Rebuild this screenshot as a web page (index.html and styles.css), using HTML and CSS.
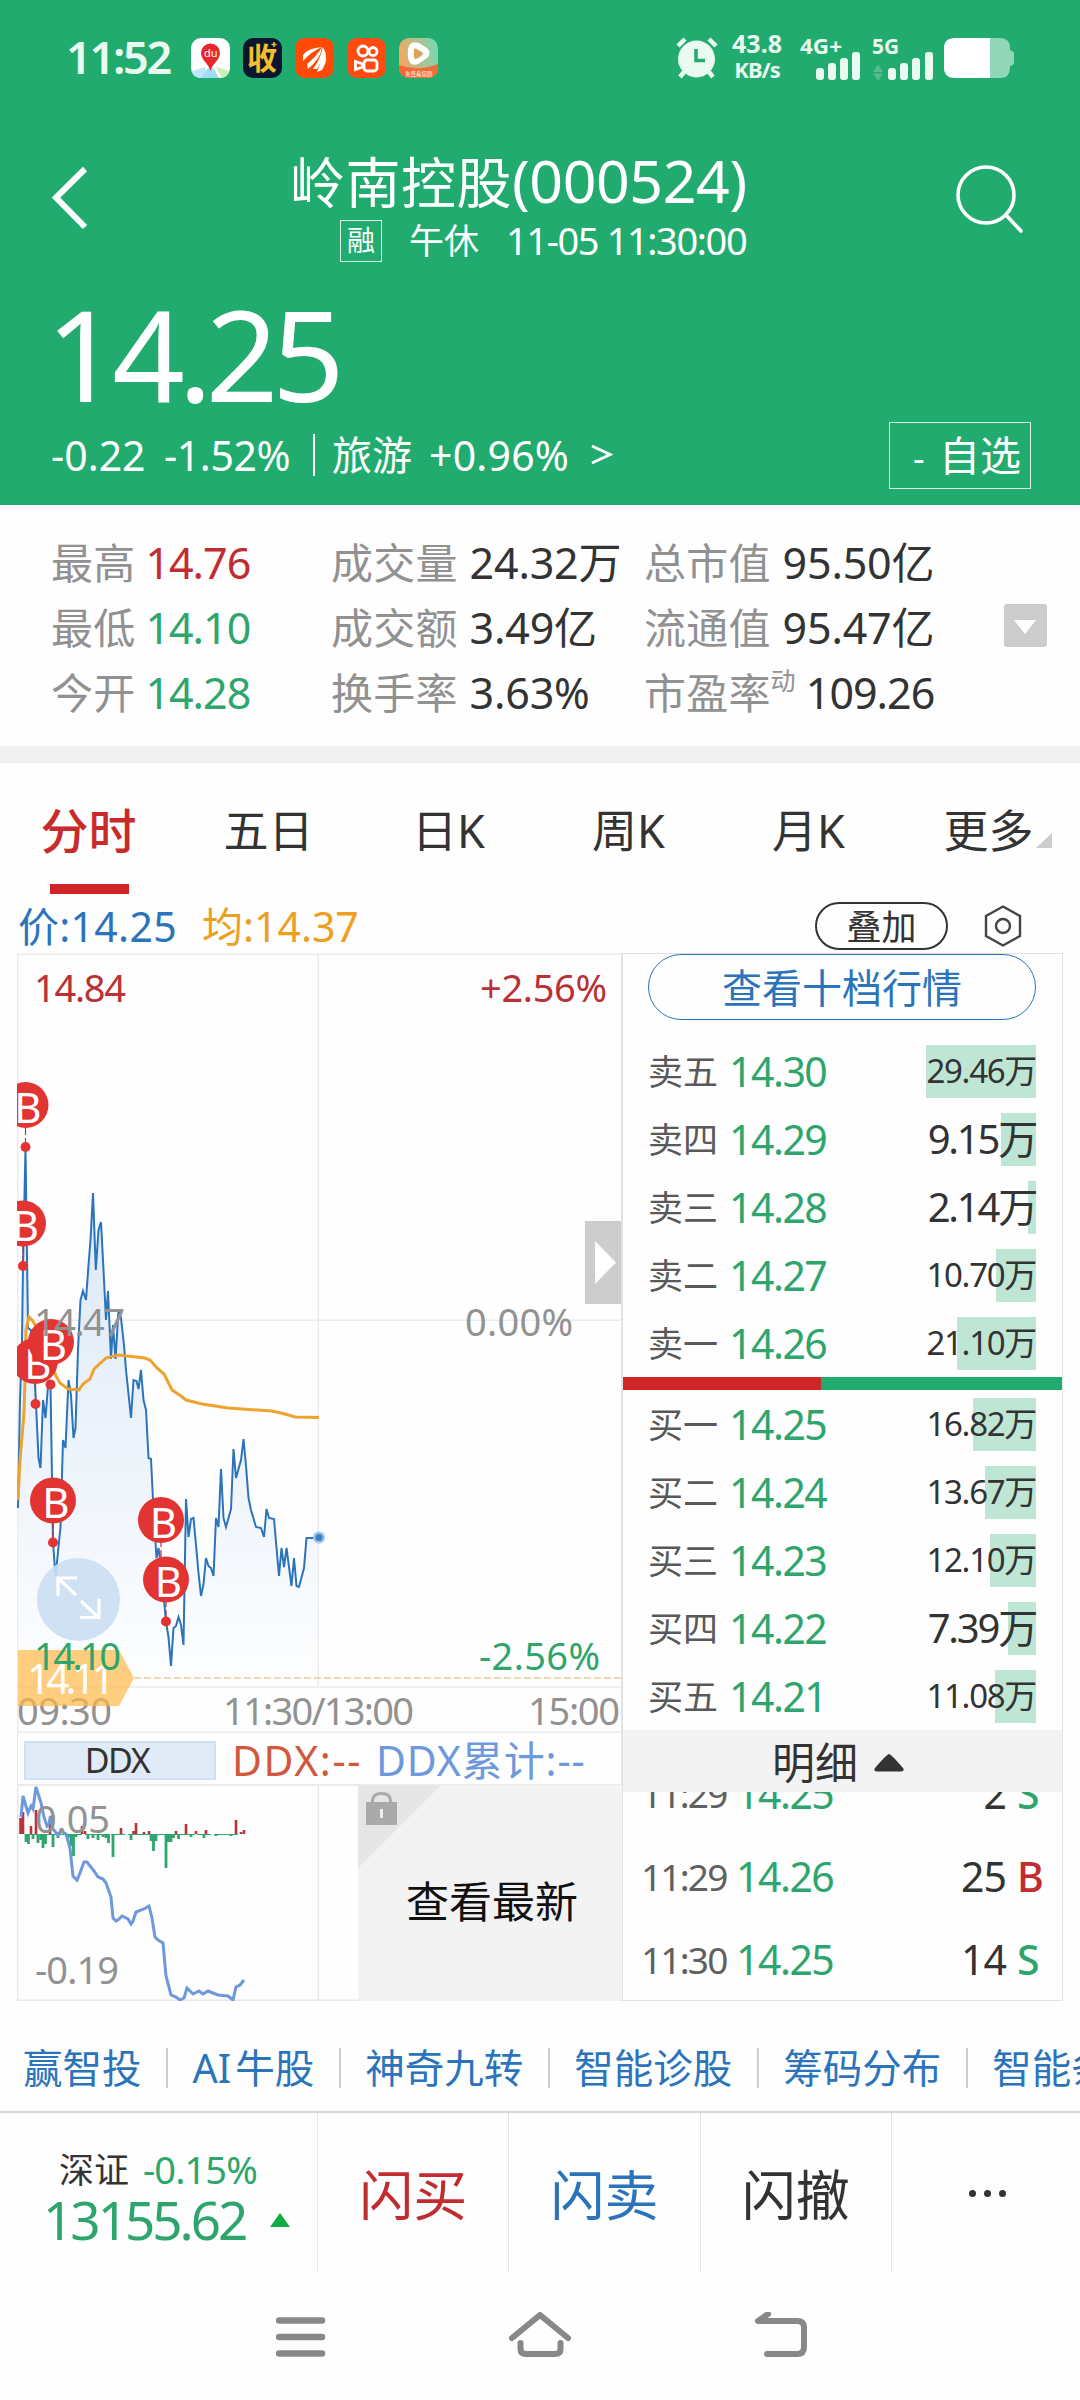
FILE: index.html
```html
<!DOCTYPE html>
<html lang="zh-CN">
<head>
<meta charset="UTF-8">
<meta name="viewport" content="width=device-width, initial-scale=1.0">
<title>岭南控股(000524)</title>
<link rel="stylesheet" href="styles.css">
</head>
<body>
    <!-- Green quote header -->
    <div class="header">
        <div class="statusbar">
            <span class="clock">11:52</span>
            <div class="apps">
                <svg viewBox="0 0 39 40" width="39" height="40">
                    <rect width="39" height="40" rx="10" fill="#fff"/>
                    <path d="M1 33 L14 29 L17 40 H9 Q2 39 1 33Z" fill="#bfe6fb"/>
                    <path d="M17 30 H22 L28 40 H10Z" fill="#9fdcf8"/>
                    <path d="M25 29 L38 33 Q37 39 31 40Z" fill="#c9eeb4"/>
                    <path d="M19.500 33 C18 26 10 22 10 15 A9.500 9.500 0 0 1 29 15 C29 22 21 26 19.500 33Z" fill="#e8272c"/>
                    <text x="13" y="19" class="app-du">du</text>
                </svg>
                <svg viewBox="0 0 39 40" width="39" height="40">
                    <rect width="39" height="40" rx="10" fill="#08172d"/>
                    <text x="4" y="31" class="app-shou">收</text>
                    <path d="M31 4v5M28.500 6.500h5" stroke="#f5bd2c" stroke-width="1.500"/>
                </svg>
                <svg viewBox="0 0 39 40" width="39" height="40">
                    <rect width="39" height="40" rx="10" fill="#ff4a05"/>
                    <path d="M8 17 Q13 10 27 9 Q17 13 8 23Z M12 26 Q22 18 27 9 Q26 20 13 31Z M22 34 Q27 22 28 9 Q35 21 27 32Z" fill="#fff"/>
                    <path d="M18 31 Q25 22 28 9 Q29 21 22 31Z" fill="#fff"/>
                </svg>
                <svg viewBox="0 0 39 40" width="39" height="40">
                    <rect width="39" height="40" rx="10" fill="#ff4a10"/>
                    <g fill="none" stroke="#fff" stroke-width="2.800">
                        <circle cx="16" cy="13" r="5"/><circle cx="26" cy="13.500" r="4"/>
                        <rect x="17" y="22" width="13" height="11" rx="3"/>
                        <path d="M8.500 23.500v8l7-2.500v-3Z"/>
                    </g>
                </svg>
                <svg viewBox="0 0 39 40" width="39" height="40">
                    <defs><linearGradient id="play" x1="0" x2="1" y1="0.200" y2="0"><stop offset="0" stop-color="#f0a868"/><stop offset="1" stop-color="#6fdcb8"/></linearGradient></defs>
                    <rect width="39" height="40" rx="10" fill="url(#play)"/>
                    <path d="M0 27 Q20 34 39 26 V31 Q38 39 30 40 H9 Q1 39 0 31Z" fill="#f26a35"/>
                    <path d="M11 6 Q15 3 20 5 L28 10 Q33 15 28 20 L19 26 Q10 29 9 19 Q8 10 11 6Z" fill="#fff"/>
                    <path d="M15 11 Q16 9 24 15 Q25 17 17 21 Q14 22 15 11Z" fill="#dba45e"/>
                    <text x="6" y="38" class="app-play">免费看短剧</text>
                </svg>
            </div>
            <svg class="alarm" viewBox="0 0 42 42" width="42" height="42">
                <circle cx="20.500" cy="22" r="18.500" fill="#e9faf1"/>
                <path d="M2 9 L9 2 M33 2 L40 9 M8 35 L4 40 M33 35 L37 40" stroke="#e9faf1" stroke-width="4.500"/>
                <path d="M20 12 V23.500 H29" fill="none" stroke="#22ab6e" stroke-width="3.500"/>
            </svg>
            <div class="speed"><span>43.8</span><span>KB/s</span></div>
            <svg class="signal" viewBox="0 0 136 46" width="136" height="46">
                <g fill="#e9faf1">
                    <text x="0" y="19" textLength="42" lengthAdjust="spacingAndGlyphs">4G+</text>
                    <text x="72" y="19" textLength="27" lengthAdjust="spacingAndGlyphs">5G</text>
                    <rect x="16" y="33" width="8" height="12" rx="3"/><rect x="28" y="28" width="8" height="17" rx="3"/>
                    <rect x="40" y="23" width="8" height="22" rx="3"/><rect x="52" y="17" width="8" height="28" rx="3"/>
                    <rect x="88" y="33" width="8" height="12" rx="3"/><rect x="100" y="28" width="8" height="17" rx="3"/>
                    <rect x="112" y="23" width="8" height="22" rx="3"/><rect x="125" y="17" width="8" height="28" rx="3"/>
                </g>
                <path d="M73 37 L78 29.500 L83 37Z M73 38.500 L78 45.500 L83 38.500Z" fill="#52bd8d"/>
            </svg>
            <svg class="battery" viewBox="0 0 70 40" width="70" height="40">
                <path d="M46 0 H56 Q66 0 66 10 V12 Q70 13 70 16 V24 Q70 27 66 28 V30 Q66 40 56 40 H46Z" fill="#90d6b7"/>
                <path d="M46 0 H11 Q0 0 0 10 V30 Q0 40 11 40 H46Z" fill="#fff"/>
            </svg>
        </div>

        <div class="titlebar">
            <svg class="back" viewBox="0 0 38 64" width="38" height="64"><path d="M34 3 L5 31.500 L34 61" fill="none" stroke="#fff" stroke-width="6"/></svg>
            <div class="title">
                <h1>岭南控股<span>(000524)</span></h1>
                <p><span class="tag">融</span><span class="state">午休</span><span class="time">11-05 11:30:00</span></p>
            </div>
            <svg class="search" viewBox="0 0 68 68" width="68" height="68"><g fill="none" stroke="#fff" stroke-width="3.600"><circle cx="30" cy="30" r="28"/><path d="M50 50 L65 66" stroke-linecap="round"/></g></svg>
        </div>

        <div class="price">14.25</div>
        <div class="change">
            <span class="c1">-0.22</span><span class="c2">-1.52%</span><i></i><span class="c3">旅游</span><span class="c4">+0.96%</span>
            <svg viewBox="0 0 22 24" width="22" height="24"><path d="M1 3 L19 11.500 L1 20" fill="none" stroke="#fff" stroke-width="3"/></svg>
            <button class="fav">- <b>自选</b></button>
        </div>
    </div>

    <!-- Key figures -->
    <div class="stats">
        <div class="cell"><label>最高</label><span class="up">14.76</span></div>
        <div class="cell wide"><label>成交量</label><span>24.32万</span></div>
        <div class="cell wide"><label>总市值</label><span>95.50亿</span></div>
        <div class="cell"><label>最低</label><span class="down">14.10</span></div>
        <div class="cell wide"><label>成交额</label><span>3.49亿</span></div>
        <div class="cell wide"><label>流通值</label><span>95.47亿</span></div>
        <div class="cell"><label>今开</label><span class="down">14.28</span></div>
        <div class="cell wide"><label>换手率</label><span>3.63%</span></div>
        <div class="cell"><label>市盈率<sup>动</sup></label><span>109.26</span></div>
        <div class="more"></div>
    </div>

    <div class="tabs">
        <a class="active">分时</a><a>五日</a><a>日K</a><a>周K</a><a>月K</a><a class="last">更多</a>
    </div>

    <div class="legend">
        <span class="now">价:14.25</span><span class="avg">均:14.37</span>
        <button>叠加</button>
        <svg viewBox="0 0 40 42" width="40" height="42"><g fill="none" stroke="#444" stroke-width="2.400"><path d="M20 1.500 L37 11 V31 L20 40.500 L3 31 V11Z"/><circle cx="20" cy="21" r="7"/></g></svg>
    </div>

    <div class="board">
        <div class="charts">
            <!-- Minute chart -->
            <svg class="minute" viewBox="17 953 605 780" width="605" height="780">
                <defs><linearGradient id="area" x1="0" y1="0" x2="0" y2="1"><stop offset="0" stop-color="#d9e6f5"/><stop offset="1" stop-color="#fdfeff"/></linearGradient>
                <clipPath id="plot"><rect x="17" y="953" width="605" height="780"/></clipPath></defs>
                <path d="M18 1508 L20 1400 22 1340 23 1266 25.500 1147 28 1328 31 1330 35 1385 36 1404 38.500 1458 40.500 1468 43 1400 45.500 1418 48 1386 50.500 1384 53 1542 55.500 1577 60.500 1527 63 1440 65.500 1448 68.500 1380 71 1395 73.500 1438 75.500 1428 78 1350 80.500 1300 83 1291 86 1300 88.500 1265 90.500 1240 93 1193 95.800 1270 98.500 1230 101 1222 103.500 1270 106 1320 108 1291 111 1359 113 1325 115.500 1359 118.500 1310 121 1318 124 1345 126 1370 131 1418 133.500 1380 136.500 1381 138.500 1389 141 1370 143.500 1400 146 1410 148.500 1458 151 1459 153.500 1510 156.500 1558 158.500 1548 161 1565 166 1622 168.500 1637 171 1666 173.500 1628 176 1626 178.500 1617 181 1625 183.500 1645 186 1499 188.500 1537 191 1519 193.500 1518 196 1545 198.500 1573 201 1596 203.500 1584 206 1558 208.500 1566 211 1568 213.500 1576 216 1518 218.500 1527 221 1469 223.500 1518 226 1527 231 1509 233.500 1449 236 1478 241 1460 243.500 1439 246 1466 248.500 1498 251 1510 256 1527 261 1528 264 1537 266.500 1509 269 1518 274 1519 276.500 1548 279 1576 281.500 1548 284 1567 286.500 1548 291.500 1586 294 1558 296.500 1586 299 1587 304 1568 306.500 1538 318 1538 V1686 H18Z" fill="url(#area)"/>
                <g fill="none" stroke="#ececec" stroke-width="1.500">
                    <path d="M17.700 1733 V954.200 H622 M318.300 954 V1687 M17 1320.300 H622 M17 1687 H622 M17 1732.300 H622"/>
                </g>
                <path d="M134 1678 H621" stroke="#ecd9b8" stroke-width="2" stroke-dasharray="7 3"/>
                <path d="M18 1508 L20 1400 22 1340 23 1266 25.500 1147 28 1328 31 1330 35 1385 36 1404 38.500 1458 40.500 1468 43 1400 45.500 1418 48 1386 50.500 1384 53 1542 55.500 1577 60.500 1527 63 1440 65.500 1448 68.500 1380 71 1395 73.500 1438 75.500 1428 78 1350 80.500 1300 83 1291 86 1300 88.500 1265 90.500 1240 93 1193 95.800 1270 98.500 1230 101 1222 103.500 1270 106 1320 108 1291 111 1359 113 1325 115.500 1359 118.500 1310 121 1318 124 1345 126 1370 131 1418 133.500 1380 136.500 1381 138.500 1389 141 1370 143.500 1400 146 1410 148.500 1458 151 1459 153.500 1510 156.500 1558 158.500 1548 161 1565 166 1622 168.500 1637 171 1666 173.500 1628 176 1626 178.500 1617 181 1625 183.500 1645 186 1499 188.500 1537 191 1519 193.500 1518 196 1545 198.500 1573 201 1596 203.500 1584 206 1558 208.500 1566 211 1568 213.500 1576 216 1518 218.500 1527 221 1469 223.500 1518 226 1527 231 1509 233.500 1449 236 1478 241 1460 243.500 1439 246 1466 248.500 1498 251 1510 256 1527 261 1528 264 1537 266.500 1509 269 1518 274 1519 276.500 1548 279 1576 281.500 1548 284 1567 286.500 1548 291.500 1586 294 1558 296.500 1586 299 1587 304 1568 306.500 1538 318 1538" fill="none" stroke="#2b74bb" stroke-width="2"/>
                <path d="M18 1500 L20 1460 24 1413 25 1380 26 1330 29 1317 32 1320 37 1328 50 1360 56 1376 60 1383 68 1389 79 1390 83 1384 90 1379 94 1369 106 1358 118 1355 145 1358 150 1360 157 1368 164 1374 172 1390 181 1396 186 1400 202 1404 228 1408 272 1411 285 1414 295 1417 319 1417.500" fill="none" stroke="#eda32d" stroke-width="3"/>
                <circle cx="319" cy="1537.500" r="6" fill="#9cc3ea"/><circle cx="319" cy="1537.500" r="3.500" fill="#3f80c4"/>
                <!-- Buy markers -->
                <g class="marks" clip-path="url(#plot)">
                    <path d="M25.500 1128 V1145 M23 1246 V1264 M35.500 1384 V1400 M53 1522 V1540 M161 1540 V1560 M166 1600 V1620" stroke="#c2303c" stroke-width="1.200" stroke-dasharray="7 3"/>
                    <circle cx="25.500" cy="1147" r="5"/><circle cx="23" cy="1266" r="5"/><circle cx="35.500" cy="1404" r="5"/><circle cx="50.500" cy="1384.500" r="5"/><circle cx="53" cy="1542.500" r="5"/><circle cx="166" cy="1621.500" r="5"/>
                    <circle cx="25.500" cy="1105" r="23"/><text x="28" y="1122.500">B</text>
                    <circle cx="23" cy="1223.500" r="23"/><text x="25.500" y="1241">B</text>
                    <circle cx="35" cy="1361" r="23"/><text x="38" y="1378.500">B</text>
                    <circle cx="51" cy="1342" r="23"/><text x="53.500" y="1359.500">B</text>
                    <circle cx="53" cy="1500.500" r="23"/><text x="56" y="1518">B</text>
                    <circle cx="161" cy="1520" r="23"/><text x="163.500" y="1537.500">B</text>
                    <circle cx="166" cy="1579.500" r="23"/><text x="168.500" y="1597">B</text>
                </g>
                <!-- Fullscreen toggle -->
                <circle cx="78.500" cy="1599.500" r="41.500" fill="#cbdef1" fill-opacity="0.920"/>
                <path d="M58 1596 V1578 H77 M59 1579 L76 1595 M81 1601 L98 1617 M99 1599 V1617.500 H80" fill="none" stroke="#fff" stroke-width="3.200"/>
                <!-- Axis labels -->
                <g class="axis">
                    <text x="34" y="1336" textLength="91">14.47</text><text x="465" y="1336" textLength="108">0.00%</text>
                    <text x="17" y="1725" textLength="95">09:30</text><text x="223" y="1725" textLength="191">11:30/13:00</text><text x="528" y="1725" textLength="92">15:00</text>
                </g>
                <path d="M18 1650 H119 L134 1678 L119 1706 H18Z" fill="#ffb847" fill-opacity="0.700"/>
                <text x="27" y="1694" textLength="88" class="tagtext">14.11</text>
                <g class="axis">
                    <text x="34" y="1001.500" textLength="92" class="up">14.84</text><text x="480" y="1001.500" textLength="127" class="up">+2.56%</text>
                    <text x="34" y="1670" textLength="87" class="down">14.10</text><text x="479" y="1670" textLength="121" class="down">-2.56%</text>
                </g>
                <rect x="585" y="1221" width="37" height="83" fill="#cdcdcd"/><path d="M595 1241 L616 1262.500 L595 1284Z" fill="#fff"/>
            </svg>
            <!-- DDX indicator -->
            <div class="ddx-head">
                <button>DDX</button><span class="d1">DDX:--</span><span class="d2">DDX累计:--</span>
            </div>
            <div class="ddx">
                <svg viewBox="17 1786 341 215" width="341" height="215">
                    <path d="M17.700 1786 V2000.300 H358 M318.300 1786 V2000" fill="none" stroke="#e8e8e8" stroke-width="1.500"/>
                    <path d="M25 1834.500 H240" stroke="#2ea66e" stroke-width="1" stroke-dasharray="14 3 24 2"/>
                    <path d="M20.500 1834v-16M23 1834v-22M31 1834v-8M36 1834v-24M50 1834v-15M82 1834v-8M85 1834v-3M121 1834v-6M133.500 1834v-3M136 1834v-11M144 1834v-2M149 1834v-3M176 1834v-3M186 1834v-10M196 1834v-3M206 1834v-4M236 1834v-14M241 1834v-2M244 1834v-4" stroke="#bb3338" stroke-width="2.600"/>
                    <path d="M26 1834v8M28.500 1834v10M33 1834v5M38 1834v9M41 1834v6M43 1834v14M45.500 1834v10M53 1834v13M58 1834v4M68 1834v4M71 1834v12M73.500 1834v22M76 1834v3M88 1834v5M93 1834v4M98 1834v6M103 1834v3M106 1834v4M108.500 1834v9M113 1834v23M131 1834v6M151 1834v7M153.500 1834v17M156 1834v7M166 1834v34M168.500 1834v8M171 1834v8M173.500 1834v4M178.500 1834v5M191 1834v3M204 1834v4M216 1834v2M231 1834v2" stroke="#2ea66e" stroke-width="2.800"/>
                    <path d="M21 1817 L23 1796 28 1813 31 1806 33 1809 36 1787 41 1803 44 1817 47 1826 49 1824 50.500 1816 53 1829 58 1835 61 1831 66 1834 70 1848 73 1876 77 1880 80 1873 84 1862 87 1862 94 1871 98 1877 103 1879 106 1883 111 1897 113 1918 116 1921 118 1920 122 1916 128 1919 131 1924 133 1921 136 1912 144 1909 149 1906 152 1918 155 1937 158 1940 163 1943 166 1976 171 1995 176 1997 180 2000 184 1998 187 1988 193 1994 199 1991 203 1994 208 1991 218 1995 228 1996 233 2000 236 1987 240 1985 244 1980" fill="none" stroke="#6d99dc" stroke-width="3"/>
                    <g class="axis"><text x="35" y="1833" textLength="75">0.05</text><text x="35" y="1984" textLength="84">-0.19</text></g>
                </svg>
                <div class="locked">
                    <svg viewBox="0 0 83 83" width="83" height="83"><path d="M0 0 H83 L0 83Z" fill="#e6e6e6"/><path d="M14.500 17 V16 Q14.500 8.500 23.500 8.500 Q32.500 8.500 32.500 16 V17" fill="none" stroke="#aaa" stroke-width="3"/><rect x="8" y="17" width="31" height="23" fill="#aaa"/><rect x="22" y="24" width="3" height="9" fill="#eee"/></svg>
                    查看最新
                </div>
            </div>
        </div>

        <!-- Order book -->
        <div class="book">
            <button class="level">查看十档行情</button>
            <div class="row"><label>卖五</label><span class="down">14.30</span><em class="small"><i style="width:110px"></i><b>29.46万</b></em></div>
            <div class="row"><label>卖四</label><span class="down">14.29</span><em><i style="width:35px"></i><b>9.15万</b></em></div>
            <div class="row"><label>卖三</label><span class="down">14.28</span><em><i style="width:8px"></i><b>2.14万</b></em></div>
            <div class="row"><label>卖二</label><span class="down">14.27</span><em class="small"><i style="width:40px"></i><b>10.70万</b></em></div>
            <div class="row"><label>卖一</label><span class="down">14.26</span><em class="small"><i style="width:79px"></i><b>21.10万</b></em></div>
            <div class="ratio"></div>
            <div class="row"><label>买一</label><span class="down">14.25</span><em class="small"><i style="width:63px"></i><b>16.82万</b></em></div>
            <div class="row"><label>买二</label><span class="down">14.24</span><em class="small"><i style="width:51px"></i><b>13.67万</b></em></div>
            <div class="row"><label>买三</label><span class="down">14.23</span><em class="small"><i style="width:46px"></i><b>12.10万</b></em></div>
            <div class="row"><label>买四</label><span class="down">14.22</span><em><i style="width:28px"></i><b>7.39万</b></em></div>
            <div class="row"><label>买五</label><span class="down">14.21</span><em class="small"><i style="width:41px"></i><b>11.08万</b></em></div>
            <div class="detail">明细<svg viewBox="0 0 30 18" width="30" height="18"><path d="M15 0 Q17 0 29 14 Q31 17 27 17.500 H3 Q-1 17 1 14 Q13 0 15 0Z" fill="#333"/></svg></div>
            <div class="trades">
                <div class="trade"><label>11:29</label><span class="down">14.25</span><em>2</em><b class="down">S</b></div>
                <div class="trade"><label>11:29</label><span class="down">14.26</span><em>25</em><b class="up">B</b></div>
                <div class="trade"><label>11:30</label><span class="down">14.25</span><em>14</em><b class="down">S</b></div>
            </div>
        </div>
    </div>

    <div class="links">
        <a>赢智投</a><a>AI<s></s>牛股</a><a>神奇九转</a><a>智能诊股</a><a>筹码分布</a><a>智能条件</a>
    </div>

    <div class="actions">
        <div class="index">
            <p><span class="name">深证</span><span class="pct">-0.15%</span></p>
            <p><span class="point">13155.62</span><svg viewBox="0 0 20 14" width="20" height="14"><path d="M10 0 L20 14 H0Z" fill="#11ab43"/></svg></p>
        </div>
        <a class="buy">闪买</a><a class="sell">闪卖</a><a>闪撤</a>
        <a class="dots"><i></i><i></i><i></i></a>
    </div>

    <div class="navkeys">
        <svg viewBox="0 0 50 50" width="50" height="50"><path d="M3 8.500 H46 M3 25 H46 M3 41.500 H46" stroke="#888" stroke-width="6.500" stroke-linecap="round"/></svg>
        <svg viewBox="0 0 64 50" width="64" height="50"><g fill="none" stroke="#888" stroke-width="6" stroke-linecap="round" stroke-linejoin="round"><path d="M4 26 L32 3 L60 26"/><path d="M12.500 31 V37 Q12.500 42 18 42 H47 Q52.500 42 52.500 37 V31"/></g></svg>
        <svg viewBox="0 0 56 50" width="56" height="50"><path d="M14 2 L4 9 H43 Q50 9 50 15 V35 Q50 42 43 42 H13" fill="none" stroke="#888" stroke-width="6" stroke-linecap="round" stroke-linejoin="round"/></svg>
    </div>
</body>
</html>
```

FILE: styles.css
```css
/*General formatting*/
* {
    box-sizing: border-box;
}

body {
    font-family: "Noto Sans", "Noto Sans CJK SC", sans-serif;
    width: 1080px;
    height: 2400px;
    margin: 0;
    overflow: hidden;
    background-color: #fefefe;
    color: #333;
    line-height: 1;
}

svg {
    display: block;
    flex: none;
}

h1, p {
    margin: 0;
    font-weight: 400;
}

button {
    font-family: inherit;
    background: none;
    padding: 0;
    line-height: 1;
}

em, i {
    font-style: normal;
}

.up {
    color: #c12c2f;
    fill: #b93035;
}

.down {
    color: #2ea56d;
    fill: #2ea56d;
}

/* Header */
.header {
    height: 505px;
    background-color: #22ab6e;
    color: #fff;
}

.statusbar {
    display: flex;
    height: 115px;
    padding-left: 66px;
    align-items: center;
}

.clock {
    width: 125px;
    font-size: 45px;
    font-weight: 600;
    line-height: 64px;
    letter-spacing: -2.300px;
    color: #e9faf1;
    margin-top: -2px;
}

.apps {
    display: flex;
    gap: 13px;
    width: 485px;
}

.app-du {
    font-size: 11px;
    fill: #fff;
}

.app-shou {
    font-family: "Noto Sans CJK SC", sans-serif;
    font-size: 30px;
    font-weight: 700;
    fill: #f5bd2c;
}

.app-play {
    font-size: 5.500px;
    fill: #fff;
}

.speed {
    width: 56px;
    margin: -4px 15px 0 11px;
    display: flex;
    flex-direction: column;
    gap: 2px;
    font-size: 25px;
    font-weight: 700;
    text-align: center;
    color: #e9faf1;
}

.speed span + span {
    font-size: 22px;
    letter-spacing: -1px;
}

.signal {
    font-size: 22px;
    font-weight: 700;
    margin-right: 8px;
}

.titlebar {
    display: flex;
    height: 165px;
    padding: 0 55px 0 51px;
    align-items: flex-start;
}

.back {
    margin-top: 51px;
}

.title {
    flex: 1;
    margin-top: 31px;
    padding-left: 2px;
}

.title h1 {
    height: 68px;
    padding-left: 199px;
    font-size: 55px;
    line-height: 68px;
    letter-spacing: 0.500px;
    white-space: nowrap;
}

.title h1 span {
    font-size: 59px;
    letter-spacing: -0.400px;
}

.title p {
    display: flex;
    align-items: center;
    height: 44px;
    padding-left: 249px;
    margin-top: 5px;
}

.tag {
    width: 42px;
    height: 42px;
    border: 1px solid #d8f2e5;
    font-size: 28px;
    line-height: 39px;
    text-align: center;
}

.state {
    margin: -2px 0 0 27px;
    width: 97px;
    font-size: 35px;
}

.time {
    font-size: 38px;
    letter-spacing: -1.400px;
    margin-top: -3px;
    white-space: nowrap;
}

.search {
    margin-top: 50px;
    margin-right: 1px;
}

.price {
    height: 130px;
    padding-left: 46px;
    margin-top: 8px;
    font-size: 127px;
    font-weight: 400;
    line-height: 130px;
    letter-spacing: -6.500px;
}

.change {
    display: flex;
    align-items: center;
    height: 66px;
    padding-left: 51px;
    margin-top: 4px;
    font-size: 41px;
    white-space: nowrap;
}

.change .c1 {
    width: 113px;
}

.change .c2 {
    width: 149px;
    letter-spacing: -0.400px;
}

.change i {
    width: 2px;
    height: 42px;
    background: #fff;
    margin-right: 17px;
}

.change .c3 {
    width: 97px;
    font-size: 40px;
}

.change .c4 {
    width: 162px;
    letter-spacing: 0.200px;
}

.fav {
    width: 142px;
    height: 67px;
    margin-left: 276px;
    padding-left: 14px;
    border: 1px solid #d8f2e5;
    color: #fff;
    font-size: 36px;
    white-space: nowrap;
}

.fav b {
    font-size: 41px;
    font-weight: 400;
    margin-left: 5px;
}

/* Key figures */
.stats {
    position: relative;
    display: grid;
    grid-template-columns: 280px 313px 400px;
    grid-template-rows: 65px 65px 65px;
    height: 258px;
    padding: 25px 0 0 51px;
    border-bottom: 17px solid #f0f0f0;
}

.cell {
    display: flex;
    align-items: center;
    height: 65px;
    font-size: 43px;
    letter-spacing: -1px;
    white-space: nowrap;
}

.wide {
    letter-spacing: -0.200px;
}

.cell label {
    color: #919191;
    font-size: 42px;
    letter-spacing: 0.200px;
    margin-right: 10px;
}

.wide label {
    margin-right: 12px;
}

.cell sup {
    font-size: 25px;
    line-height: 0;
    vertical-align: 19px;
}

.more {
    position: absolute;
    right: 33px;
    top: 99px;
    width: 43px;
    height: 43px;
    border-radius: 3px;
    background: #ccc;
}

.more::after {
    content: "";
    position: absolute;
    left: 10px;
    top: 16px;
    border: 11px solid transparent;
    border-top: 14px solid #fff;
    border-bottom: 0;
}

/* Period tabs */
.tabs {
    display: grid;
    grid-template-columns: repeat(6, 1fr);
    height: 132px;
    text-align: center;
    font-size: 45px;
}

.tabs a {
    position: relative;
    line-height: 136px;
    padding-right: 3px;
    white-space: nowrap;
}

.tabs .active {
    font-size: 48px;
    font-weight: 500;
    color: #c92b2d;
}

.tabs .active::after {
    content: "";
    position: absolute;
    left: 50px;
    bottom: 5px;
    width: 79px;
    height: 10px;
    background: #d02526;
}

.tabs .last::after {
    content: "";
    position: absolute;
    left: 136px;
    top: 70px;
    border-left: 16px solid transparent;
    border-bottom: 15px solid #ccc;
}

.legend {
    display: flex;
    align-items: center;
    height: 58px;
    padding: 4px 0 0 18px;
    font-size: 41px;
    white-space: nowrap;
}

.now {
    width: 184px;
    letter-spacing: 0.300px;
    color: #2b74bb;
}

.avg {
    width: 613px;
    color: #eda01f;
}

.legend button {
    width: 133px;
    height: 48px;
    border: 2px solid #333;
    border-radius: 24px;
    font-size: 35px;
    color: #333;
    margin-right: 35px;
}

/* Chart area */
.board {
    display: flex;
    padding-left: 17px;
    height: 1048px;
}

.charts {
    width: 605px;
    flex: none;
}

.axis {
    font-size: 38px;
    fill: #929292;
}

.tagtext {
    font-size: 41px;
    fill: #fff;
}

.marks circle {
    fill: #e33434;
}

.marks text {
    font-size: 42px;
    fill: #fff;
    text-anchor: middle;
}

.ddx-head {
    display: flex;
    align-items: center;
    height: 53px;
    padding: 3px 0 0 6px;
    border-left: 1px solid #e8e8e8;
    border-bottom: 2px solid #ececec;
    font-size: 41px;
    white-space: nowrap;
}

.ddx-head button {
    width: 192px;
    height: 39px;
    border: 2px solid #cfdff7;
    background: #e1ebf7;
    font-size: 34px;
    color: #333;
    letter-spacing: -1.500px;
    padding-right: 6px;
}

.d1 {
    width: 144px;
    margin-left: 16px;
    color: #d2573c;
    letter-spacing: 1.600px;
}

.d2 {
    color: #6d99dc;
    letter-spacing: 0.900px;
}

.ddx {
    display: flex;
    height: 215px;
}

.locked {
    position: relative;
    width: 264px;
    margin-top: -1px;
    padding-left: 4px;
    background: #f3f3f3;
    font-size: 43px;
    line-height: 233px;
    text-align: center;
    color: #111;
}

.locked svg {
    position: absolute;
    left: 0;
    top: 0;
}

/* Order book */
.book {
    width: 442px;
    height: 1048px;
    border: 1px solid #e2e2e2;
    border-left-width: 2px;
    margin-left: -1px;
}

.level {
    display: block;
    width: 388px;
    height: 66px;
    padding-top: 1px;
    margin: 0 0 17px 25px;
    border: 1px solid #2b74bb;
    border-radius: 33px;
    font-size: 40px;
    color: #2b74bb;
}

.row {
    display: flex;
    align-items: center;
    height: 68px;
    padding: 0 26px 0 25px;
}

.row label {
    width: 81px;
    font-size: 35px;
    color: #595959;
}

.row > span {
    flex: 1;
    font-size: 41px;
    letter-spacing: -1.500px;
}

.row em {
    position: relative;
    width: 112px;
    height: 53px;
    font-size: 40px;
    line-height: 52px;
    text-align: right;
    white-space: nowrap;
}

.row em i {
    position: absolute;
    right: 0;
    top: 0;
    height: 53px;
    background: #bfe6d5;
}

.row em b {
    position: relative;
    font-weight: 400;
    letter-spacing: -2.200px;
}

.row .small {
    font-size: 33px;
}

.row .small b {
    letter-spacing: -1.300px;
}

.ratio {
    height: 13px;
    background: linear-gradient(90deg, #d02526 198px, #22ab6e 198px);
}

.detail {
    display: flex;
    align-items: center;
    height: 62px;
    padding: 3px 0 0 149px;
    background: #f3f3f3;
    font-size: 43px;
}

.detail svg {
    margin-left: 16px;
}

.trades {
    height: 205px;
    overflow: hidden;
}

.trade {
    display: flex;
    align-items: center;
    height: 83px;
    padding: 0 19px 0 18px;
    font-size: 41px;
}

.trade:first-child {
    margin-top: -40px;
}

.trade label {
    width: 95px;
    font-size: 37px;
    letter-spacing: -1.800px;
    color: #606060;
}

.trade span {
    flex: 1;
    letter-spacing: -1.500px;
}

.trade em {
    letter-spacing: -1px;
}

.trade b {
    width: 26px;
    margin-left: 11px;
    font-weight: 500;
}

/* Shortcut links */
.links {
    display: flex;
    align-items: center;
    height: 110px;
    padding: 23px 0 0 23px;
    overflow: hidden;
    font-size: 39.500px;
    color: #2b74bb;
}

.links a {
    flex: none;
    height: 40px;
    line-height: 40px;
    padding-right: 24.500px;
    margin-right: 24.500px;
    border-right: 2px solid #ccc;
    white-space: nowrap;
}

.links s {
    display: inline-block;
    width: 4px;
}

/* Bottom bar */
.actions {
    display: flex;
    height: 162px;
    border-top: 2px solid #d5d5d5;
}

.index {
    flex: none;
    width: 318px;
    padding-top: 36px;
    border-right: 1px solid #e5e5e5;
}

.index p {
    display: flex;
    align-items: center;
    height: 40px;
    padding-left: 59px;
    color: #2ea56d;
}

.index p + p {
    height: 61px;
    padding-left: 43px;
}

.name {
    width: 84px;
    font-size: 35px;
    color: #333;
}

.pct {
    font-size: 38px;
    letter-spacing: -0.900px;
}

.point {
    width: 227px;
    font-size: 53px;
    letter-spacing: -3px;
}

.actions a {
    flex: none;
    width: 191.300px;
    border-right: 1px solid #e5e5e5;
    font-size: 54px;
    line-height: 164px;
    text-align: center;
}

.actions .buy {
    color: #c12c2f;
}

.actions .sell {
    color: #2b74bb;
}

.actions .dots {
    display: flex;
    justify-content: center;
    align-items: center;
    gap: 8px;
    border: 0;
}

.dots i {
    width: 7px;
    height: 7px;
    border-radius: 50%;
    background: #333;
}

/* System navigation */
.navkeys {
    display: flex;
    padding: 39px 0 0 276px;
}

.navkeys svg + svg {
    margin-left: 182px;
}
```
